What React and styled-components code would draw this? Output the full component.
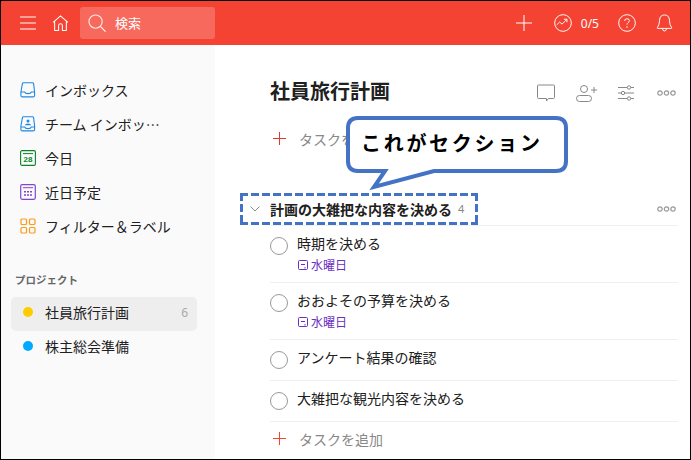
import React from "react";
import styled, { createGlobalStyle } from "styled-components";

const Global = createGlobalStyle`
  html, body { margin: 0; padding: 0; background: #fff; }
  body { font-family: "Noto Sans CJK JP", "Noto Sans", sans-serif; color: #202020; }
  * { box-sizing: border-box; }
`;

const Frame = styled.div`
  position: relative;
  width: 691px;
  height: 460px;
  border: 1px solid #000;
  overflow: hidden;
  display: flex;
  flex-direction: column;
  background: #fff;
`;

const TopBar = styled.header`
  height: 44px;
  flex: none;
  background: #f44332;
  display: flex;
  align-items: center;
  padding: 0 17px 0 19px;
  color: #fff;
`;

const IconBtn = styled.span`
  display: flex;
  align-items: center;
  justify-content: center;
  flex: none;
  margin-right: ${(p) => p.$mr || 0}px;
  svg { display: block; }
`;

const Search = styled.div`
  width: 135px;
  height: 32px;
  margin-left: 11px;
  border-radius: 3px;
  background: #f6695c;
  display: flex;
  align-items: center;
  padding-left: 8px;
  gap: 9px;
  font-size: 13px;
  color: #fff;
`;

const SearchLabel = styled.span`
  padding-bottom: 2px;
`;

const Spacer = styled.div`
  flex: 1;
`;

const Karma = styled.span`
  font-size: 12px;
  font-family: "Noto Sans", sans-serif;
  margin-left: 9px;
  margin-right: 19px;
`;

const Body = styled.div`
  flex: 1;
  display: flex;
  min-height: 0;
`;

const Sidebar = styled.aside`
  width: 214px;
  flex: none;
  background: #fafafa;
  padding: 28px 18px 0 10px;
`;

const NavRow = styled.div`
  height: 34px;
  display: flex;
  align-items: center;
  padding-left: 9px;
  font-size: 14px;
  color: #202020;
  white-space: nowrap;
`;

const NavIcon = styled.span`
  width: 16px;
  height: 16px;
  flex: none;
  margin-right: 9px;
  svg { display: block; }
`;

const ProjectsLabel = styled.div`
  margin-top: 27px;
  height: 20px;
  line-height: 20px;
  padding-left: 4px;
  font-size: 10.5px;
  font-weight: 700;
  color: #666;
`;

const ProjectRow = styled.div`
  height: 34px;
  margin-top: ${(p) => p.$mt || 0}px;
  display: flex;
  align-items: center;
  padding: 0 9px 4px 12px;
  border-radius: 5px;
  font-size: 14px;
  background: ${(p) => (p.$active ? "#eeeeee" : "transparent")};
`;

const Dot = styled.span`
  width: 10px;
  height: 10px;
  border-radius: 50%;
  flex: none;
  margin-right: 12px;
  background: ${(p) => p.$color};
`;

const Count = styled.span`
  margin-left: auto;
  font-size: 12px;
  font-family: "Noto Sans", sans-serif;
  color: #aaa;
`;

const Main = styled.main`
  flex: 1;
  min-width: 0;
  padding: 28px 12px 0 55px;
  position: relative;
`;

const TitleRow = styled.div`
  height: 34px;
  display: flex;
  align-items: center;
`;

const Title = styled.h1`
  margin: 0;
  font-size: 20px;
  font-weight: 700;
  color: #202020;
`;

const TitleIcons = styled.div`
  margin-left: auto;
  margin-top: 6px;
  margin-right: 2px;
  display: flex;
  align-items: center;
  gap: 21px;
  svg { display: block; }
  svg:last-child { margin-left: 2px; }
`;

const AddRow = styled.div`
  height: ${(p) => p.$h}px;
  display: flex;
  align-items: center;
  font-size: 14px;
  color: #888;
  gap: 13px;
  padding-left: 3px;
`;

const SectionRow = styled.div`
  height: 32px;
  margin-left: -30px;
  margin-top: 23px;
  display: flex;
  align-items: center;
`;

const dash = "repeating-linear-gradient";
const SectionMark = styled.div`
  height: 32px;
  width: 238px;
  background-image:
    ${dash}(90deg, #4472c4 0 8px, transparent 8px 11px),
    ${dash}(90deg, #4472c4 0 8px, transparent 8px 11px),
    ${dash}(180deg, #4472c4 0 8px, transparent 8px 11px),
    ${dash}(180deg, #4472c4 0 8px, transparent 8px 11px);
  background-size: 100% 3px, 100% 3px, 3px 100%, 3px 100%;
  background-position: top, bottom, left, right;
  background-repeat: no-repeat;
  display: flex;
  align-items: center;
  padding: 0 0 1px 10px;
  font-size: 14px;
  font-weight: 700;
  white-space: nowrap;
`;

const SectionCount = styled.span`
  margin-left: 6px;
  font-size: 11px;
  font-weight: 400;
  font-family: "Noto Sans", sans-serif;
  color: #888;
`;

const Chevron = styled.span`
  margin-right: 10px;
  display: flex;
`;

const SectionMore = styled.span`
  margin-left: auto;
  margin-right: 2px;
  display: flex;
`;

const TaskList = styled.div`
  border-top: 1px solid #f0f0f0;
`;

const Task = styled.div`
  height: ${(p) => p.$h}px;
  display: flex;
  gap: 9px;
  padding-top: ${(p) => p.$top}px;
  border-bottom: 1px solid #f0f0f0;
`;

const Circle = styled.span`
  width: 18px;
  height: 18px;
  margin-top: 4px;
  border-radius: 50%;
  border: 1.5px solid #999;
  flex: none;
`;

const TaskBody = styled.div`
  display: flex;
  flex-direction: column;
`;

const TaskName = styled.div`
  font-size: 14px;
  line-height: 20px;
  color: #202020;
`;

const DueDate = styled.div`
  margin-top: 3px;
  padding-left: 1px;
  display: flex;
  align-items: center;
  gap: 3px;
  font-size: 12px;
  line-height: 18px;
  color: #692fc2;
`;

const Callout = styled.div`
  position: absolute;
  left: 345px;
  top: 115px;
  width: 224px;
  height: 76px;
  z-index: 3;
`;

const CalloutShape = styled.svg`
  position: absolute;
  inset: 0;
`;

const CalloutText = styled.div`
  position: absolute;
  left: 15px;
  top: 12px;
  font-size: 20px;
  line-height: 30px;
  font-weight: 700;
  letter-spacing: 2.7px;
  color: #000;
  white-space: nowrap;
`;

const Line = ({ d, w = 1.3, c = "currentColor" }) => <path d={d} fill="none" stroke={c} strokeWidth={w} />;

const Plus = ({ size = 16, color = "#fff", w = 1 }) => (
  <svg width={size} height={size} viewBox={`0 0 ${size} ${size}`}>
    <Line d={`M${size / 2} 0v${size}M0 ${size / 2}h${size}`} c={color} w={w} />
  </svg>
);

const More = () => (
  <svg width="19" height="8" viewBox="0 0 19 8" fill="none" stroke="#999" strokeWidth="1.2">
    <circle cx="3" cy="4" r="2.2" /><circle cx="9.5" cy="4" r="2.2" /><circle cx="16" cy="4" r="2.2" />
  </svg>
);

const InboxIcon = ({ person }) => (
  <svg width="16" height="16" viewBox="0 0 16 16" fill="none" stroke="#1e88e5" strokeWidth="1.1">
    <path d="M3.500.8h9q.9 0 1.100.9l1 8.300v3.400q0 1.500-1.500 1.500H2.400Q.9 14.900.9 13.400V10l1.500-8.300q.2-.9 1.100-.9z" />
    {person ? (
      <path d="M8 3.600a1.500 1.500 0 1 1 0 3 1.500 1.500 0 0 1 0-3zM4.800 9.200q.3-1.700 3.200-1.700t3.200 1.700z" fill="#1e88e5" stroke="none" />
    ) : null}
    <path d={person ? "M1 11h3.600q.6 1.600 3.400 1.600t3.400-1.600H15" : "M1 10h3.600q.6 1.600 3.400 1.600t3.400-1.600H15"} />
  </svg>
);

const TodayIcon = () => (
  <svg width="16" height="16" viewBox="0 0 16 16" fill="none" stroke="#058527">
    <rect x=".6" y=".6" width="14.800" height="14.800" rx="1.500" strokeWidth="1.100" />
    <path d="M3 3.600h10" strokeWidth="1" />
    <text x="8" y="12.400" textAnchor="middle" fontSize="8" fontWeight="700" fontFamily="Liberation Sans" fill="#058527" stroke="none">28</text>
  </svg>
);

const UpcomingIcon = () => (
  <svg width="16" height="16" viewBox="0 0 16 16" fill="none" stroke="#8047cc">
    <rect x=".7" y=".7" width="14.600" height="14.600" rx="1.500" strokeWidth="1.200" />
    <path d="M3 3.700h10" strokeWidth="1" />
    <path d="M4 7h2v1.500H4zM7 7h2v1.500H7zM10 7h2v1.500h-2zM4 10.300h2v1.500H4zM7 10.300h2v1.500H7zM10 10.300h2v1.500h-2z" fill="#8047cc" stroke="none" />
  </svg>
);

const FilterIcon = () => (
  <svg width="16" height="16" viewBox="0 0 16 16" fill="none" stroke="#ff9a14" strokeWidth="1.200">
    <rect x="1" y="1" width="5.500" height="5.500" rx="1" />
    <rect x="9.500" y="1" width="5.500" height="5.500" rx="1" />
    <rect x="1" y="9.500" width="5.500" height="5.500" rx="1" />
    <rect x="9.500" y="9.500" width="5.500" height="5.500" rx="1" />
  </svg>
);

const DateIcon = () => (
  <svg width="10" height="10" viewBox="0 0 10 10" fill="none" stroke="#692fc2">
    <rect x=".5" y=".5" width="9" height="9" rx="1" />
    <path d="M3 4.500h4" />
    <rect x="6" y="7" width="2" height="1.500" fill="#b79be0" stroke="none" />
  </svg>
);

const tasks = [
  { name: "時期を決める", due: true, h: 57, top: 7 },
  { name: "おおよその予算を決める", due: true, h: 57, top: 7 },
  { name: "アンケート結果の確認", h: 41, top: 7 },
  { name: "大雑把な観光内容を決める", h: 41, top: 7 },
];

export default function App() {
  return (
    <>
      <Global />
      <Frame>
        <TopBar>
          <IconBtn $mr={16}>
            <svg width="16" height="14" viewBox="0 0 16 14"><Line d="M0 1h16M0 7h16M0 13h16" w={1} /></svg>
          </IconBtn>
          <IconBtn>
            <svg width="17" height="17" viewBox="0 0 18 18"><Line d="M1.200 7.800 9 .9l7.800 6.900M2.800 6.500v9.300q0 .7.700.7H7V11q0-1.800 2-1.800T11 11v5.500h3.500q.7 0 .7-.7V6.500" w={1.100} /></svg>
          </IconBtn>
          <Search>
            <svg width="18" height="18" viewBox="0 0 19 19"><circle cx="8" cy="8" r="7" fill="none" stroke="#fff" strokeOpacity=".85" strokeWidth="1.200" /><Line d="M13 13l5.500 5.500" w={1.100} /></svg>
            <SearchLabel>検索</SearchLabel>
          </Search>
          <Spacer />
          <IconBtn $mr={22}><Plus /></IconBtn>
          <IconBtn>
            <svg width="18" height="18" viewBox="0 0 19 19"><circle cx="9.500" cy="9.500" r="8.800" fill="none" stroke="#fff" strokeWidth="1" /><Line d="M2.800 11.500 6 8.500l2.500 2.200 5-5M10.500 5.500h3.200v3.200" w={1} /></svg>
          </IconBtn>
          <Karma>0/5</Karma>
          <IconBtn $mr={20}>
            <svg width="18" height="18" viewBox="0 0 19 19"><circle cx="9.500" cy="9.500" r="8.800" fill="none" stroke="#fff" strokeWidth="1" /><Line d="M7 7.400q0-2.400 2.500-2.400T12 7q0 1.300-1.300 2.100-1.200.8-1.200 2.100" w={1} /><circle cx="9.500" cy="13.600" r=".8" fill="#fff" /></svg>
          </IconBtn>
          <IconBtn>
            <svg width="17" height="19" viewBox="0 0 18 20"><Line d="M9 1Q4 1 3.800 6.500q-.1 5-2.300 7.700-.6 1 .6 1h13.800q1.200 0 .6-1-2.200-2.700-2.300-7.700Q14 1 9 1zM6.800 15.300q.3 2.700 2.200 2.700t2.200-2.700" w={1} /></svg>
          </IconBtn>
        </TopBar>
        <Body>
          <Sidebar>
            <NavRow><NavIcon><InboxIcon /></NavIcon>インボックス</NavRow>
            <NavRow><NavIcon><InboxIcon person /></NavIcon>チーム インボッ…</NavRow>
            <NavRow><NavIcon><TodayIcon /></NavIcon>今日</NavRow>
            <NavRow><NavIcon><UpcomingIcon /></NavIcon>近日予定</NavRow>
            <NavRow><NavIcon><FilterIcon /></NavIcon>フィルター＆ラベル</NavRow>
            <ProjectsLabel>プロジェクト</ProjectsLabel>
            <ProjectRow $active $mt={7}>
              <Dot $color="#ffcc00" />
              社員旅行計画
              <Count>6</Count>
            </ProjectRow>
            <ProjectRow>
              <Dot $color="#00aaff" />
              株主総会準備
            </ProjectRow>
          </Sidebar>
          <Main>
            <TitleRow>
              <Title>社員旅行計画</Title>
              <TitleIcons>
                <svg width="18" height="18" viewBox="0 0 18 18"><path d="M1.500 1h15q1 0 1 1v11.500q0 1-1 1h-5l-2 2.500v-2.500h-8q-1 0-1-1V2q0-1 1-1z" fill="none" stroke="#888" strokeWidth="1" /></svg>
                <svg width="21" height="17" viewBox="0 0 21 17"><g fill="none" stroke="#888" strokeWidth="1"><circle cx="8" cy="4" r="3.500" /><rect x=".5" y="10.500" width="15" height="6" rx="3" /><path d="M15 5h6M18 2v6" /></g></svg>
                <svg width="16" height="16" viewBox="0 0 16 16"><g fill="#fff" stroke="#888" strokeWidth="1"><path d="M0 2.500h16M0 8h16M0 13.500h16" /><circle cx="11" cy="2.500" r="1.700" /><circle cx="5" cy="8" r="1.700" /><circle cx="11" cy="13.500" r="1.700" /></g></svg>
                <More />
              </TitleIcons>
            </TitleRow>
            <AddRow $h={63}>
              <Plus size={13} color="#e0392b" />
              タスクを追加
            </AddRow>
            <SectionRow>
              <SectionMark>
                <Chevron>
                  <svg width="10" height="6" viewBox="0 0 10 6"><path d="M.5.500 5 5 9.500.500" fill="none" stroke="#888" /></svg>
                </Chevron>
                計画の大雑把な内容を決める
                <SectionCount>4</SectionCount>
              </SectionMark>
              <SectionMore><More /></SectionMore>
            </SectionRow>
            <TaskList>
              {tasks.map((t) => (
                <Task key={t.name} $h={t.h} $top={t.top}>
                  <Circle />
                  <TaskBody>
                    <TaskName>{t.name}</TaskName>
                    {t.due ? <DueDate><DateIcon />水曜日</DueDate> : null}
                  </TaskBody>
                </Task>
              ))}
            </TaskList>
            <AddRow $h={33}>
              <Plus size={13} color="#f44332" />
              タスクを追加
            </AddRow>
          </Main>
        </Body>
        <Callout>
          <CalloutShape width="224" height="76" viewBox="0 0 224 76">
            <path d="M12 2h198q10 0 10 10v33q0 10-10 10H88L28 71l11-16H12Q2 55 2 45V12Q2 2 12 2z" fill="#fff" stroke="#4472c4" strokeWidth="4" />
          </CalloutShape>
          <CalloutText>これがセクション</CalloutText>
        </Callout>
      </Frame>
    </>
  );
}
